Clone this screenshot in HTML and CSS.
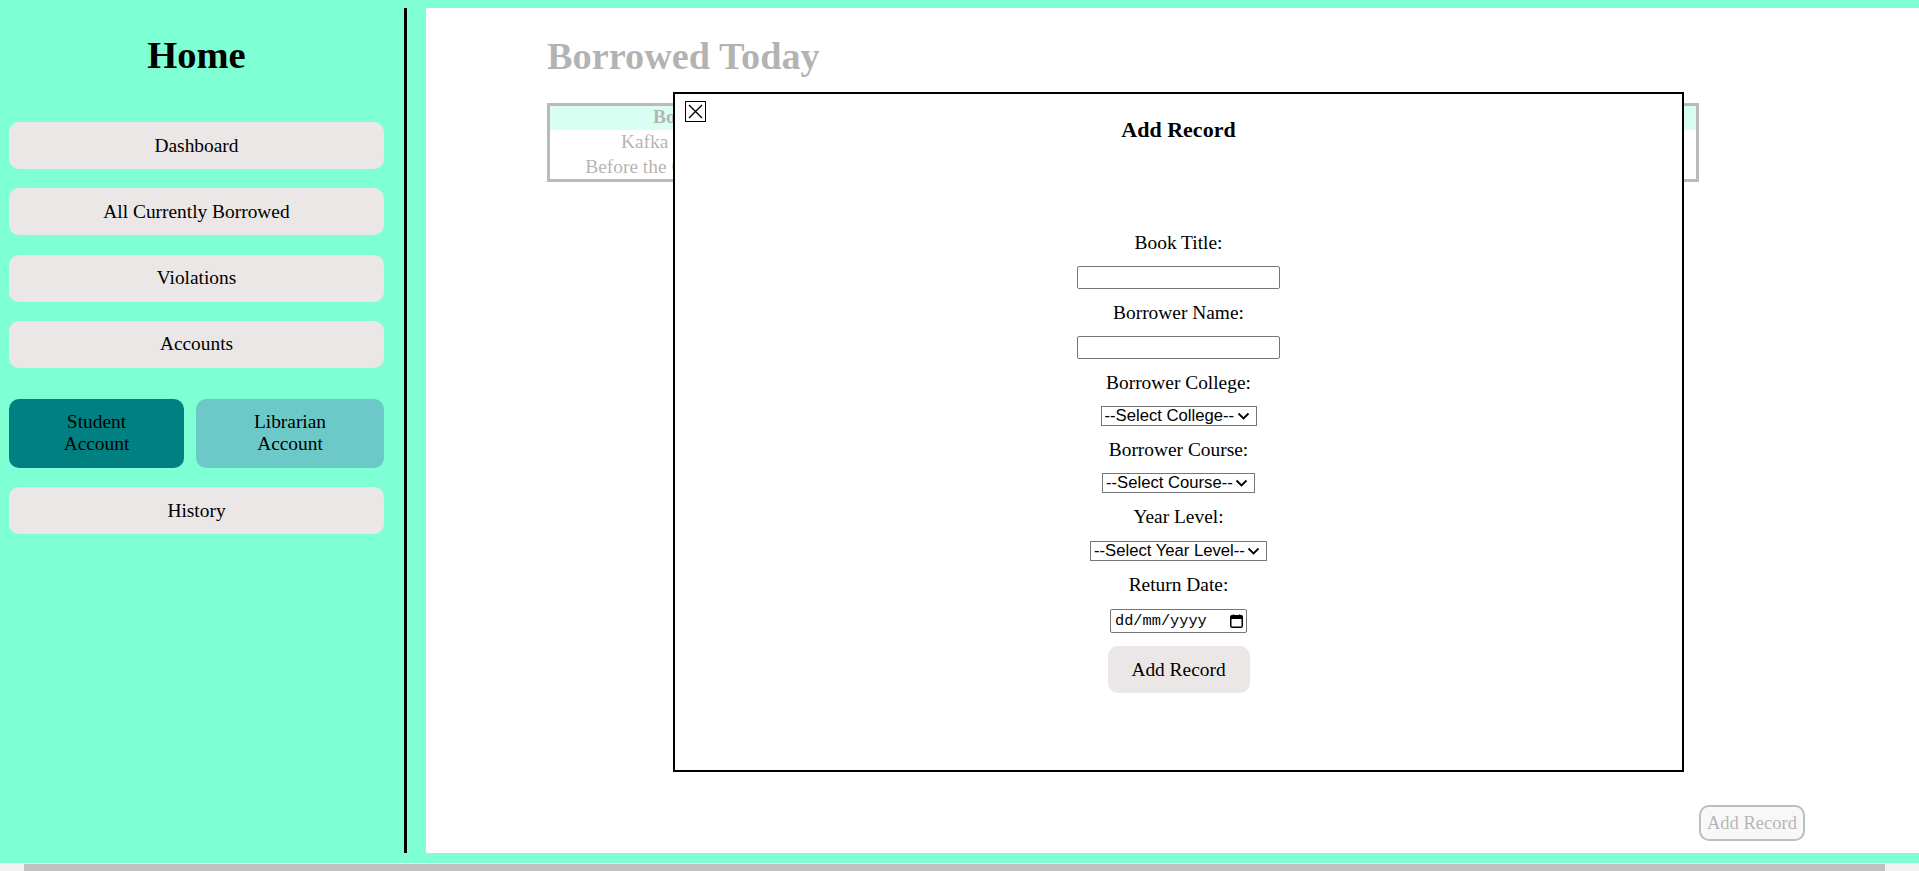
FILE: index.html
```html
<!DOCTYPE html>
<html lang="en">
<head>
<meta charset="utf-8">
<title>Borrowed Today</title>
<link rel="stylesheet" href="styles.css">
</head>
<body>
<div class="app">
  <aside class="sidebar">
    <h1 class="brand">Home</h1>
    <nav class="nav">
      <button class="nav-btn">Dashboard</button>
      <button class="nav-btn">All Currently Borrowed</button>
      <button class="nav-btn">Violations</button>
      <button class="nav-btn">Accounts</button>
      <div class="acct-row">
        <button class="acct-btn student">Student<br>Account</button>
        <button class="acct-btn librarian">Librarian<br>Account</button>
      </div>
      <button class="nav-btn">History</button>
    </nav>
  </aside>
  <main class="main">
    <h2 class="page-title">Borrowed Today</h2>
    <table class="records">
      <colgroup>
        <col class="col-a">
        <col class="col-b">
        <col class="col-c">
        <col>
      </colgroup>
      <thead>
        <tr>
          <th>Book Title</th>
          <th>Borrower</th>
          <th>Return Date</th>
          <th>Status</th>
        </tr>
      </thead>
      <tbody>
        <tr>
          <td>Kafka on the Shore</td>
          <td>Juan Dela Cruz</td>
          <td>2024-05-20</td>
          <td>Borrowed</td>
        </tr>
        <tr>
          <td>Before the Coffee Gets Cold</td>
          <td>Maria Santos</td>
          <td>2024-05-22</td>
          <td>Borrowed</td>
        </tr>
      </tbody>
    </table>
    <div class="footer">
      <button class="add-btn">Add Record</button>
    </div>

    <div class="overlay"></div>

    <div class="modal">
      <button class="close-btn" aria-label="Close">
        <svg width="19" height="19" viewBox="0 0 19 19"><path d="M3 3L16 16M16 3L3 16" stroke="#000" stroke-width="1.4" fill="none"/></svg>
      </button>
      <h3 class="modal-title">Add Record</h3>
      <form class="record-form">
        <label class="field-label">Book Title:</label>
        <input class="text-input" type="text">
        <label class="field-label">Borrower Name:</label>
        <input class="text-input" type="text">
        <label class="field-label">Borrower College:</label>
        <span class="select-wrap college">
          <select class="select"><option>--Select College--</option></select>
          <svg class="chev" width="13" height="8" viewBox="0 0 13 8"><path d="M1.5 1.5L6.5 6.5L11.5 1.5" stroke="#000" stroke-width="1.8" fill="none"/></svg>
        </span>
        <label class="field-label">Borrower Course:</label>
        <span class="select-wrap course">
          <select class="select"><option>--Select Course--</option></select>
          <svg class="chev" width="13" height="8" viewBox="0 0 13 8"><path d="M1.5 1.5L6.5 6.5L11.5 1.5" stroke="#000" stroke-width="1.8" fill="none"/></svg>
        </span>
        <label class="field-label">Year Level:</label>
        <span class="select-wrap year">
          <select class="select"><option>--Select Year Level--</option></select>
          <svg class="chev" width="13" height="8" viewBox="0 0 13 8"><path d="M1.5 1.5L6.5 6.5L11.5 1.5" stroke="#000" stroke-width="1.8" fill="none"/></svg>
        </span>
        <label class="field-label">Return Date:</label>
        <div class="date-field">
          <input class="date-input" type="text" placeholder="dd/mm/yyyy">
          <svg class="cal" width="13" height="14" viewBox="0 0 13 14">
            <rect x="0.75" y="1.75" width="11.5" height="11.5" rx="1.5" stroke="#000" stroke-width="1.5" fill="none"/>
            <rect x="0.5" y="1.5" width="12" height="3.5" fill="#000"/>
            <path d="M3.5 0.5v2M9.5 0.5v2" stroke="#000" stroke-width="1.5"/>
          </svg>
        </div>
        <button class="submit-btn" type="button">Add Record</button>
      </form>
    </div>
  </main>
</div>
<div class="hscroll">
  <span class="hscroll-arrow"></span>
  <span class="hscroll-thumb"></span>
</div>
</body>
</html>
```

FILE: styles.css
```css
* {
  box-sizing: border-box;
}

html, body {
  margin: 0;
  height: 871px;
  overflow: hidden;
}

body {
  padding-top: 8px;
  background: #7fffd4;
  font-family: "Liberation Serif", "Times New Roman", serif;
  color: #000;
}

.app {
  display: flex;
  gap: 19px;
  height: 845px;
  margin-bottom: 10px;
}

/* Sidebar */
.sidebar {
  width: 407px;
  flex: 0 0 407px;
  padding: 0 20px 0 9px;
  border-right: 3px solid #000;
}

.brand {
  margin: 25px 0 45px;
  font-size: 38.5px;
  line-height: 44px;
  font-weight: bold;
  text-align: center;
}

.nav {
  display: flex;
  flex-direction: column;
  gap: 19.33px;
}

.nav-btn {
  height: 47px;
  border: none;
  border-radius: 10px;
  background: #ebe7e7;
  font-family: inherit;
  font-size: 19.4px;
  color: #000;
  padding: 0;
}

.acct-row {
  display: grid;
  grid-template-columns: 175px 188px;
  gap: 12px;
  margin-top: 11.67px;
}

.acct-btn {
  height: 69px;
  border: none;
  border-radius: 10px;
  font-family: inherit;
  font-size: 19.4px;
  line-height: 22.5px;
  color: #000;
  padding: 0;
}

.acct-btn.student {
  background: #008080;
}

.acct-btn.librarian {
  background: #6dc9c7;
}

/* Main */
.main {
  flex: 1;
  min-width: 0;
  position: relative;
  background: #fff;
  padding-left: 121px;
  display: flex;
  flex-direction: column;
}

.page-title {
  margin: 26px 0 25px;
  font-size: 38.3px;
  line-height: 44px;
  font-weight: bold;
}

.records {
  width: 1152px;
  border: 3px solid #1a1a1a;
  border-collapse: separate;
  border-spacing: 0;
  table-layout: fixed;
  font-size: 19.4px;
}

.col-a { width: 292px; }
.col-b { width: 208px; }
.col-c { width: 500px; }

.records th {
  background: #7fffd4;
  height: 24px;
  line-height: 22px;
  padding: 0 1px 2px;
  font-weight: bold;
  text-align: center;
}

.records td {
  height: 24.5px;
  line-height: 24.5px;
  padding: 0 1px;
  text-align: center;
  white-space: nowrap;
}

.footer {
  margin-top: auto;
  padding: 0 0 12px 1152px;
}

.add-btn {
  height: 36px;
  padding: 0 6px;
  border: 2px solid #222;
  border-radius: 10px;
  background: #ebe7e7;
  font-family: inherit;
  font-size: 18.5px;
  color: #000;
}

.overlay {
  position: absolute;
  inset: 0;
  background: rgba(255, 255, 255, 0.7);
}

/* Modal */
.modal {
  position: absolute;
  left: 247px;
  top: 84px;
  width: 1011px;
  height: 680px;
  border: 2px solid #000;
  background: #fff;
}

.close-btn {
  position: absolute;
  left: 10px;
  top: 7px;
  width: 21px;
  height: 21px;
  padding: 0;
  border: 1px solid #000;
  background: #fff;
  display: flex;
  align-items: center;
  justify-content: center;
}

.close-btn svg {
  display: block;
}

.modal-title {
  margin: 23.5px 0 0;
  font-size: 22px;
  line-height: 23px;
  font-weight: bold;
  text-align: center;
}

.record-form {
  margin-top: 90.5px;
  display: flex;
  flex-direction: column;
  align-items: center;
  gap: 12px;
}

.field-label {
  font-size: 19.4px;
  line-height: 23px;
}

.text-input {
  width: 203px;
  height: 23px;
  border: 1px solid #767676;
  border-radius: 2px;
  padding: 1px 2px;
  font-family: "Liberation Sans", Arial, sans-serif;
  font-size: 16.67px;
  background: #fff;
}

.select-wrap {
  position: relative;
  display: block;
  height: 20px;
}

.select-wrap.college { width: 156px; }
.select-wrap.course { width: 153px; }
.select-wrap.year { width: 177px; margin-top: 1px; }

.select {
  appearance: none;
  -webkit-appearance: none;
  width: 100%;
  height: 20px;
  border: 1px solid #767676;
  border-radius: 0;
  background: #fff;
  padding: 0 0 0 3px;
  font-family: "Liberation Sans", Arial, sans-serif;
  font-size: 16.67px;
  line-height: 18px;
  color: #000;
}

.chev {
  position: absolute;
  right: 7px;
  top: 6px;
  pointer-events: none;
}

.date-field {
  width: 137px;
  height: 24px;
  margin-top: 1px;
  border: 1px solid #767676;
  border-radius: 2px;
  padding: 0 3px 0 4px;
  display: flex;
  align-items: center;
  justify-content: space-between;
  background: #fff;
}

.date-input {
  width: 100px;
  border: none;
  padding: 0;
  outline: none;
  font-family: "Liberation Mono", "DejaVu Sans Mono", monospace;
  font-size: 15.3px;
  color: #000;
  background: transparent;
}

.date-input::placeholder {
  color: #000;
  opacity: 1;
}

.cal {
  display: block;
  flex: 0 0 auto;
}

.submit-btn {
  width: 142px;
  height: 47px;
  margin-top: 1px;
  border: none;
  border-radius: 10px;
  background: #ebe7e7;
  font-family: inherit;
  font-size: 19.4px;
  color: #000;
  padding: 0;
}

/* Faux horizontal scrollbar */
.hscroll {
  height: 8px;
  background: #f1f1f1;
  display: flex;
  padding-top: 1px;
}

.hscroll-arrow {
  width: 24px;
  flex: 0 0 24px;
}

.hscroll-thumb {
  width: 1861px;
  background: #c1c1c1;
}
```
